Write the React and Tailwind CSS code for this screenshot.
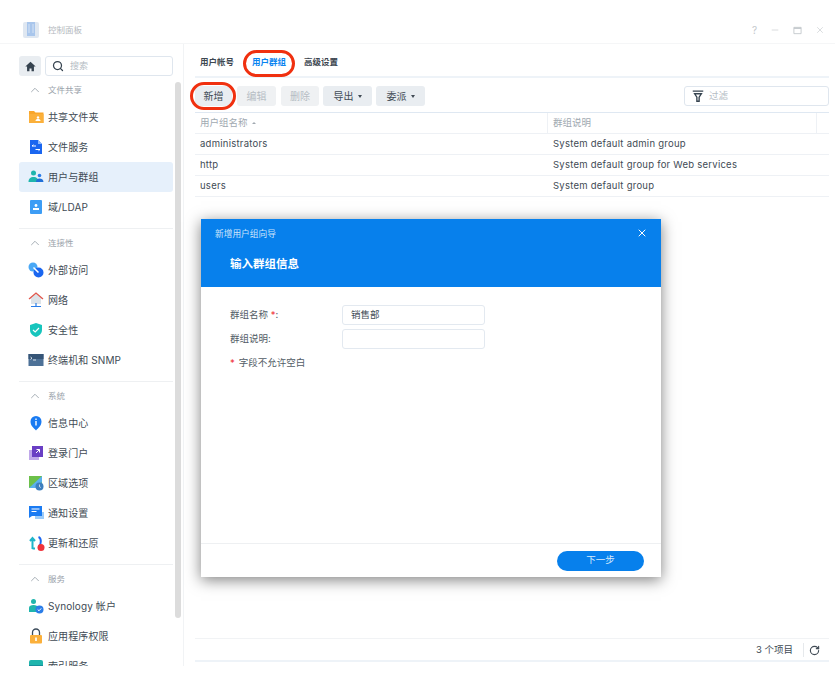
import React from "react";
import { ChevronUp, Search, RotateCw, X, Minus } from "lucide-react";

const FONT = "font-['Inter','Noto_Sans_CJK_SC',sans-serif]";

// sidebar icons, all on a 16 box
const FolderIcon = () => (
  <svg viewBox="0 0 16 16" className="w-4 h-4">
    <path d="M1 2h5l1.500 1.500H15.500V14H1z" fill="#f9a62b" />
    <rect x="1" y="5" width="14.500" height="9" fill="#fbb03b" />
    <circle cx="10" cy="8.500" r="1.200" fill="#fff" />
    <path d="M7.500 12c0-1.500 1-2 2.500-2s2.500.5 2.500 2z" fill="#fff" />
  </svg>
);
const FileServiceIcon = () => (
  <svg viewBox="0 0 16 16" className="w-4 h-4">
    <path d="M2 1h8l4 4v10H2z" fill="#1a66f0" />
    <path d="M10 1l4 4h-4z" fill="#8db8fa" />
    <path d="M4 7h4M4 7l1.500-1.200M12 10.500H7.500M12 10.500l-1.500 1.200" stroke="#fff" strokeWidth="1" fill="none" />
  </svg>
);
const UsersIcon = () => (
  <svg viewBox="0 0 16 16" className="w-4 h-4">
    <circle cx="5.500" cy="4" r="2.500" fill="#1fb5ad" />
    <path d="M.5 13c0-3.500 2-5 5-5s5 1.500 5 5z" fill="#1fb5ad" />
    <circle cx="11.500" cy="6.500" r="1.800" fill="#2a7de8" />
    <path d="M8 13c0-2.500 1.500-3.500 3.500-3.500S15.500 10.500 15.500 13z" fill="#1f6fd8" />
  </svg>
);
const LdapIcon = () => (
  <svg viewBox="0 0 16 16" className="w-4 h-4">
    <rect x="2" y="1" width="12" height="14" rx="1" fill="#3d9df5" />
    <circle cx="8" cy="6.500" r="1.400" fill="#fff" />
    <rect x="5" y="9" width="6" height="2" fill="#fff" />
  </svg>
);
const ExternalIcon = () => (
  <svg viewBox="0 0 16 16" className="w-4 h-4">
    <circle cx="5" cy="5" r="4.500" fill="#4aa8f5" />
    <circle cx="10.500" cy="10.500" r="5" fill="#1a66f0" />
    <path d="M5.500 5.500l5 5" stroke="#fff" strokeWidth="1.500" />
  </svg>
);
const NetworkIcon = () => (
  <svg viewBox="0 0 16 16" className="w-4 h-4">
    <path d="M8 1L1 7h2v5h10V7h2z" fill="#dde3e8" />
    <path d="M1 7l7-6 7 6" stroke="#e2574c" strokeWidth="1.300" fill="none" />
    <path d="M8 11v3M3 14.500h10" stroke="#2a7de8" strokeWidth="1.200" />
  </svg>
);
const ShieldIcon = () => (
  <svg viewBox="0 0 16 16" className="w-4 h-4">
    <path d="M8 1l6 2v5c0 3.500-3 6-6 7-3-1-6-3.500-6-7V3z" fill="#17c5bd" />
    <path d="M5 8l2.200 2L11 6" stroke="#fff" strokeWidth="1.200" fill="none" />
  </svg>
);
const TerminalIcon = () => (
  <svg viewBox="0 0 16 16" className="w-4 h-4">
    <rect x="0.500" y="2" width="15" height="12" fill="#4d7197" />
    <rect x="0.500" y="2" width="15" height="5" fill="#365577" />
    <path d="M2.500 5l1.500 1.200-1.500 1.200M5 8h3" stroke="#fff" strokeWidth=".8" fill="none" />
  </svg>
);
const InfoIcon = () => (
  <svg viewBox="0 0 16 16" className="w-4 h-4">
    <path d="M8 15.500C6 13 2.500 11 2.500 6.500a5.500 5.500 0 0 1 11 0C13.500 11 10 13 8 15.500z" fill="#1a7bf2" />
    <rect x="7.300" y="6" width="1.400" height="4.500" fill="#fff" />
    <rect x="7.300" y="3.500" width="1.400" height="1.500" fill="#fff" />
  </svg>
);
const PortalIcon = () => (
  <svg viewBox="0 0 16 16" className="w-4 h-4">
    <rect x="1" y="5" width="10" height="10" fill="#c0a8ea" />
    <rect x="4" y="1" width="11" height="11" fill="#6a3fc4" />
    <path d="M8 8l3.500-3.500M8.500 4.500h3v3" stroke="#fff" strokeWidth="1" fill="none" />
  </svg>
);
const RegionIcon = () => (
  <svg viewBox="0 0 16 16" className="w-4 h-4">
    <rect x="1" y="1" width="13" height="12" fill="#6cc04a" />
    <path d="M1 13L14 1v6l-6 6z" fill="#5ab0ee" />
    <circle cx="11.500" cy="11.500" r="4" fill="#3f7fbf" />
    <path d="M11.500 9.500v2.200l1.300.8" stroke="#fff" strokeWidth=".7" fill="none" />
  </svg>
);
const NotifyIcon = () => (
  <svg viewBox="0 0 16 16" className="w-4 h-4">
    <rect x="7" y="7" width="9" height="7" fill="#9ccbf8" />
    <path d="M1 1h13v10H4l-3 2z" fill="#1a7bf2" />
    <path d="M3.500 4h8M3.500 6.500h5" stroke="#fff" strokeWidth="1" />
  </svg>
);
const UpdateIcon = () => (
  <svg viewBox="0 0 16 16" className="w-4 h-4 overflow-visible">
    <path d="M4.500 14V4M2 6l2.500-3L7 6M4.500 13.500H7" stroke="#1fb5c9" strokeWidth="2" fill="none" />
    <path d="M10.500 2c3 1 3 7 .5 9" stroke="#1a66f0" strokeWidth="2" fill="none" />
    <circle cx="13" cy="12.500" r="3.500" fill="#f0323a" />
  </svg>
);
const AccountIcon = () => (
  <svg viewBox="0 0 16 16" className="w-4 h-4">
    <circle cx="5.500" cy="3.500" r="2.500" fill="#1fb5ad" />
    <path d="M1 14V9.500C1 8 3 7 5.500 7S10 8 10 9.500V14z" fill="#1fb5ad" />
    <circle cx="11.500" cy="11.500" r="4" fill="#2a7de8" />
    <path d="M9.700 11.500l1.300 1.300 2.200-2.400" stroke="#fff" strokeWidth="1" fill="none" />
  </svg>
);
const LockIcon = () => (
  <svg viewBox="0 0 16 16" className="w-4 h-4">
    <path d="M4.500 8V4.500a3.500 3.500 0 0 1 7 0V8" stroke="#3a4a5a" strokeWidth="1.300" fill="none" />
    <rect x="2" y="7" width="12" height="8.500" rx="1" fill="#fbb03b" />
    <rect x="7.200" y="9.500" width="1.600" height="3.500" fill="#fff" />
  </svg>
);
const IndexIcon = () => (
  <svg viewBox="0 0 16 16" className="w-4 h-4">
    <rect x="1" y="2" width="14" height="12" rx="2" fill="#1fb5ad" />
    <rect x="1" y="7" width="14" height="7" fill="#178f9c" />
  </svg>
);

const sections = [
  {
    title: "文件共享",
    items: [
      { label: "共享文件夹", icon: <FolderIcon /> },
      { label: "文件服务", icon: <FileServiceIcon /> },
      { label: "用户与群组", icon: <UsersIcon />, active: true },
      { label: "域/LDAP", icon: <LdapIcon /> },
    ],
  },
  {
    title: "连接性",
    items: [
      { label: "外部访问", icon: <ExternalIcon /> },
      { label: "网络", icon: <NetworkIcon /> },
      { label: "安全性", icon: <ShieldIcon /> },
      { label: "终端机和 SNMP", icon: <TerminalIcon /> },
    ],
  },
  {
    title: "系统",
    items: [
      { label: "信息中心", icon: <InfoIcon /> },
      { label: "登录门户", icon: <PortalIcon /> },
      { label: "区域选项", icon: <RegionIcon /> },
      { label: "通知设置", icon: <NotifyIcon /> },
      { label: "更新和还原", icon: <UpdateIcon /> },
    ],
  },
  {
    title: "服务",
    items: [
      { label: "Synology 帐户", icon: <AccountIcon /> },
      { label: "应用程序权限", icon: <LockIcon /> },
      { label: "索引服务", icon: <IndexIcon /> },
    ],
  },
];

const rows = [
  ["administrators", "System default admin group"],
  ["http", "System default group for Web services"],
  ["users", "System default group"],
];

function Sidebar() {
  return (
    <aside className="relative w-[184px] h-[622px] shrink-0 border-r border-[#f1f3f5] overflow-hidden pl-[19px]">
      <div className="flex gap-[4px] pt-[12px] w-[154px]">
        <div className="w-[22px] h-[20px] rounded-[3px] bg-[#e9edf1] flex items-center justify-center">
          <svg viewBox="0 0 16 16" className="w-[11px] h-[11px]">
            <path d="M8 1L0.500 8H3v7h3.500v-4h3v4H13V8h2.500z" fill="#36434f" />
          </svg>
        </div>
        <div className="flex-1 h-[20px] rounded-[3px] border border-[#dfe6ee] flex items-center pl-[6px] gap-[6px]">
          <Search className="w-[12px] h-[12px] text-[#36434f]" strokeWidth={2.500} />
          <span className="text-[9px] text-[#b4bcc4]">搜索</span>
        </div>
      </div>
      <div className="w-[154px] pt-[6px]">
        {sections.map((s, i) => (
          <div key={s.title} className={i > 0 ? "border-t border-[#eef0f2] mt-[6px]" : ""}>
            <div className={`flex items-center h-[16px] pl-[9px] gap-[6px] ${i > 0 ? "mt-[6px]" : ""}`}>
              <ChevronUp className="w-[14px] h-[14px] text-[#9aa3ab]" strokeWidth={1.500} />
              <span className="text-[8.500px] text-[#9aa3ab]">{s.title}</span>
            </div>
            <div className="mt-[4px]">
              {s.items.map((item) => (
                <div
                  key={item.label}
                  className={`flex items-center h-[30px] pl-[9px] gap-[4px] rounded-[3px] ${item.active ? "bg-[#e6f0fb]" : ""}`}
                >
                  {item.icon}
                  <span className="text-[10px] text-[#414b55] tracking-[0.1px] whitespace-nowrap">{item.label}</span>
                </div>
              ))}
            </div>
          </div>
        ))}
      </div>
      <div className="absolute left-[175px] top-[38px] w-[6px] h-[536px] rounded-[3px] bg-[#dcdcdc]" />
    </aside>
  );
}

function ToolButton({ children, disabled, caret, className }) {
  return (
    <div
      className={`h-[20px] rounded-[3px] flex items-center justify-center gap-[4px] text-[10px] ${className} ${
        disabled ? "bg-[#eff1f3] text-[#b6bdc4]" : "bg-[#e9edf1] text-[#414b55]"
      }`}
    >
      {children}
      {caret && <span className="w-0 h-0 border-x-[2.500px] border-x-transparent border-t-[3px] border-t-[#414b55]" />}
    </div>
  );
}

function MainPanel() {
  return (
    <main className="flex-1 h-[622px] flex flex-col pl-[11px] pr-[6px] pb-[4px]">
      <div className="flex items-center h-[34px] pt-[4px] gap-[18px] pl-[5px] border-b-2 border-[#eef3f8] text-[8.500px] font-semibold text-[#3d4751]">
        <span>用户帐号</span>
        <span className="text-[#0a84f0]">用户群组</span>
        <span>高级设置</span>
      </div>
      <div className="flex items-center h-[35px] pt-[2px] border-b border-[#dfe8f2]">
        <ToolButton className="w-[37px]">新增</ToolButton>
        <ToolButton disabled className="w-[39px] ml-[5px]">编辑</ToolButton>
        <ToolButton disabled className="w-[38px] ml-[5px]">删除</ToolButton>
        <ToolButton caret className="w-[49px] ml-[4px]">导出</ToolButton>
        <ToolButton caret className="w-[49px] ml-[4px]">委派</ToolButton>
        <div className="ml-auto w-[145px] h-[20px] rounded-[3px] border border-[#dfe6ee] flex items-center pl-[7px] gap-[5px]">
          <svg viewBox="0 0 16 16" className="w-[12px] h-[12px]">
            <path d="M1 1.500h14M3.500 5h9L9.500 9.500V15h-3V9.500z" stroke="#36434f" strokeWidth="1.800" fill="#fff" />
          </svg>
          <span className="text-[9.500px] text-[#b4bcc4]">过滤</span>
        </div>
      </div>
      <div className="flex h-[21px] shrink-0 items-center border-b border-[#eef1f5] text-[9.500px] text-[#a1a9b1]">
        <div className="w-[352px] pl-[5px] flex items-center gap-[4px]">
          用户组名称
          <span className="w-0 h-0 border-x-[2px] border-x-transparent border-b-[2.500px] border-b-[#a1a9b1]" />
        </div>
        <div className="flex-1 h-full flex items-center pl-[5px] border-l border-r border-[#eef1f5]">群组说明</div>
        <div className="w-[12px]" />
      </div>
      {rows.map(([name, desc]) => (
        <div key={name} className="flex h-[21px] shrink-0 items-center border-b border-[#eef1f5] text-[9.500px] text-[#414b55] tracking-[0.25px]">
          <div className="w-[352px] pl-[5px]">{name}</div>
          <div className="pl-[6px]">{desc}</div>
        </div>
      ))}
      <div className="mt-auto h-[20px] pt-[1px] border-t border-[#f1f3f5] border-b-2 border-b-[#eef3f8] flex items-center justify-end text-[9.500px] text-[#414b55] box-content">
        <span>3 个项目</span>
        <span className="w-px h-[14px] bg-[#e6e9ec] ml-[10px] mr-[5px]" />
        <RotateCw className="w-[11px] h-[11px] text-[#414b55] mr-[9px]" strokeWidth={2.500} />
      </div>
    </main>
  );
}

function Dialog() {
  return (
    <div className="absolute left-[201px] top-[219px] w-[460px] h-[358px] bg-white flex flex-col shadow-[0_3px_14px_rgba(0,0,0,0.5)]">
      <div className="h-[68px] bg-[#0780ec] text-white relative pl-[14px]">
        <div className="text-[8.700px] text-[#cfe5fb] pt-[9px]">新增用户组向导</div>
        <div className="text-[11.500px] font-semibold pl-[15px] mt-[15px]">输入群组信息</div>
        <X className="absolute right-[13px] top-[8px] w-[12px] h-[12px] text-white" strokeWidth={2} />
      </div>
      <div className="flex-1 pl-[29px] pt-[18px] text-[9.500px] text-[#525c66]">
        <div className="flex items-center h-[20px]">
          <span className="w-[112px]">
            群组名称 <span className="text-[#f0323a]">*</span>:
          </span>
          <div className="w-[143px] h-[20px] rounded-[3px] border border-[#e3e9f0] flex items-center pl-[8px] text-[#414b55]">销售部</div>
        </div>
        <div className="flex items-center h-[20px] mt-[4px]">
          <span className="w-[112px]">群组说明:</span>
          <div className="w-[143px] h-[20px] rounded-[3px] border border-[#e3e9f0]" />
        </div>
        <div className="mt-[7px] h-[14px] flex items-center">
          <span className="text-[#f0323a] mr-[4px]">*</span>字段不允许空白
        </div>
      </div>
      <div className="h-[34px] shrink-0 border-t border-[#eef0f2] flex items-center justify-end pr-[17px]">
        <div className="w-[87px] h-[20px] rounded-full bg-[#0780ec] text-[#d8eafc] text-[9.500px] flex items-center justify-center">下一步</div>
      </div>
    </div>
  );
}

export default function App() {
  return (
    <div className={`relative w-[835px] h-[675px] bg-white overflow-hidden ${FONT}`}>
      <header className="h-[44px] flex items-center pt-[17px] pl-[22px] pr-[10px] border-b border-[#f5f6f7]">
        <svg viewBox="0 0 18 18" className="w-[18px] h-[18px] mr-[8px]">
          <rect x="1" y="1" width="16" height="16" rx="2" fill="#dfe7f1" />
          <rect x="5" y="1" width="8" height="14" fill="#a9c6ec" />
          <path d="M7 3v9M11 3v9" stroke="#d5e3f5" strokeWidth="1" />
        </svg>
        <span className="text-[8.500px] text-[#b4b9be]">控制面板</span>
        <div className="ml-auto flex items-center gap-[13px] text-[#c3c8cc]">
          <span className="text-[10px]">?</span>
          <Minus className="w-[10px] h-[10px]" strokeWidth={1.500} />
          <svg viewBox="0 0 10 10" className="w-[9px] h-[9px]">
            <path d="M1 1.500h8v7H1z" stroke="currentColor" fill="none" />
            <path d="M1 2.500h8" stroke="currentColor" strokeWidth="1.500" />
          </svg>
          <X className="w-[10px] h-[10px]" strokeWidth={1.500} />
        </div>
      </header>
      <div className="flex">
        <Sidebar />
        <MainPanel />
      </div>
      <Dialog />
      {/* hand drawn marks over the tab and the button */}
      <div className="absolute left-[243px] top-[50px] w-[52px] h-[27px] rounded-full border-[3.500px] border-[#f0300f]" />
      <div className="absolute left-[190px] top-[82px] w-[46px] h-[28px] rounded-full border-[3.500px] border-[#f0300f]" />
    </div>
  );
}
